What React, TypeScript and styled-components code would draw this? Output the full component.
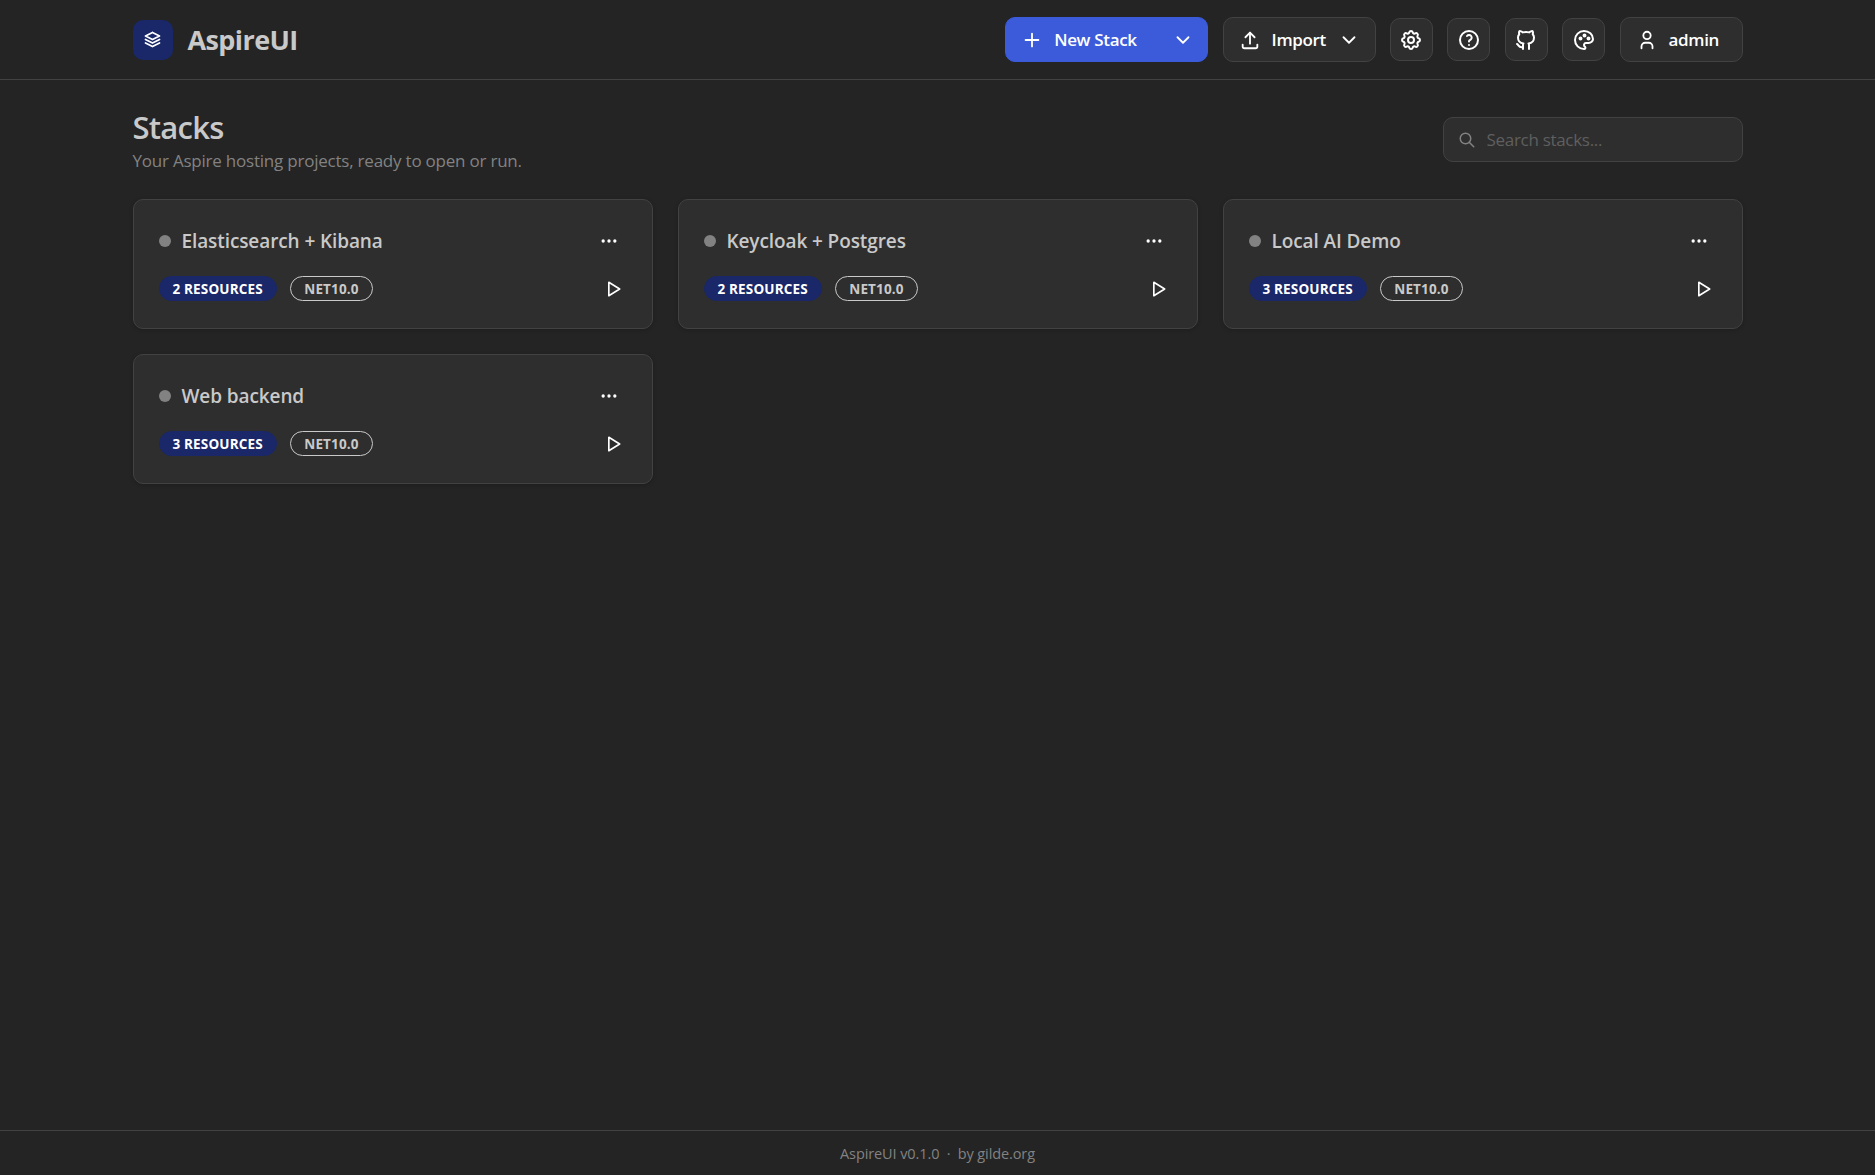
import styled, { createGlobalStyle } from 'styled-components';
import {
  TbStack2,
  TbPlus,
  TbChevronDown,
  TbUpload,
  TbSettings,
  TbHelp,
  TbBrandGithub,
  TbPalette,
  TbUser,
  TbSearch,
  TbDots,
  TbPlayerPlay,
} from 'react-icons/tb';

const GlobalStyle = createGlobalStyle`
  html, body { margin: 0; height: 100%; }
  body {
    background: #242424;
    color: #c9c9c9;
    font-family: "Open Sans", "Noto Sans", "Liberation Sans", sans-serif;
  }
  #root { height: 100%; }
`;

const Shell = styled.div`
  display: flex;
  flex-direction: column;
  height: 1175px;
`;

const Header = styled.header`
  display: flex;
  align-items: center;
  justify-content: space-between;
  height: 80px;
  padding: 0 132.5px;
  border-bottom: 1px solid #424242;
  box-sizing: border-box;
  flex: none;
`;

const Brand = styled.div`
  display: flex;
  align-items: center;
  gap: 15px;
`;

const LogoMark = styled.div`
  display: flex;
  align-items: center;
  justify-content: center;
  width: 40px;
  height: 40px;
  border-radius: 10px;
  background: #1a2768;
  color: #fff;
  font-size: 21px;
`;

const BrandName = styled.span`
  font-size: 27px;
  font-weight: 700;
  letter-spacing: -0.6px;
`;

const Toolbar = styled.nav`
  display: flex;
  align-items: center;
  gap: 14.4px;
`;

const Button = styled.button<{ $primary?: boolean; $width: number; $endPad: number }>`
  display: flex;
  align-items: center;
  width: ${(p) => p.$width}px;
  height: 45px;
  padding: 0 ${(p) => p.$endPad}px 0 15px;
  border-radius: 10px;
  border: 1px solid ${(p) => (p.$primary ? '#3b5bdb' : '#424242')};
  background: ${(p) => (p.$primary ? '#3b5bdb' : '#2e2e2e')};
  color: #fff;
  font: 600 17px "Open Sans", sans-serif;
  letter-spacing: -0.33px;
  box-sizing: border-box;
  svg { flex: none; font-size: 22px; }
`;

const ButtonLabel = styled.span`
  margin-left: 11px;
  flex: 1;
  text-align: left;
`;

const IconButton = styled.button`
  display: flex;
  align-items: center;
  justify-content: center;
  width: 43px;
  height: 43px;
  padding: 0;
  border-radius: 10px;
  border: 1px solid #424242;
  background: #2e2e2e;
  color: #fff;
  font-size: 24px;
  box-sizing: border-box;
`;

const Main = styled.main`
  flex: 1;
  padding: 25.5px 132.5px 0;
`;

const TitleRow = styled.div`
  display: flex;
  align-items: center;
  justify-content: space-between;
  margin-bottom: 25px;
`;

const PageTitle = styled.h1`
  margin: 0;
  font-size: 31px;
  line-height: 42px;
  font-weight: 600;
  letter-spacing: -0.75px;
`;

const Subtitle = styled.p`
  margin: 0;
  font-size: 17px;
  line-height: 26px;
  color: #828282;
  letter-spacing: -0.22px;
`;

const SearchBox = styled.label`
  display: flex;
  align-items: center;
  gap: 11px;
  width: 300px;
  height: 45px;
  padding: 0 14px;
  border-radius: 10px;
  border: 1px solid #424242;
  background: #2e2e2e;
  color: #828282;
  font-size: 18px;
  box-sizing: border-box;
`;

const SearchInput = styled.input`
  flex: 1;
  min-width: 0;
  border: 0;
  outline: 0;
  padding: 0;
  background: transparent;
  color: #c9c9c9;
  font: 400 17px "Open Sans", sans-serif;
  letter-spacing: -0.3px;
  &::placeholder { color: #5f5f5f; opacity: 1; }
`;

const CardGrid = styled.section`
  display: grid;
  grid-template-columns: repeat(3, 1fr);
  gap: 25px;
`;

const Card = styled.article`
  display: flex;
  flex-direction: column;
  gap: 22px;
  height: 130px;
  padding: 28px 25px 0;
  border-radius: 10px;
  border: 1px solid #424242;
  background: #2e2e2e;
  box-shadow: 0 1px 4px rgba(0, 0, 0, 0.2);
  box-sizing: border-box;
`;

const CardRow = styled.div`
  display: flex;
  align-items: center;
  justify-content: space-between;
  height: 26px;
`;

const CardTitleGroup = styled.div`
  display: flex;
  align-items: center;
  gap: 11px;
`;

const StatusDot = styled.span`
  width: 12px;
  height: 12px;
  border-radius: 50%;
  background: #828282;
`;

const CardTitle = styled.h2`
  margin: 0;
  font-size: 19px;
  font-weight: 600;
  letter-spacing: -0.1px;
`;

const BadgeGroup = styled.div`
  display: flex;
  align-items: center;
  gap: 13px;
`;

const Badge = styled.span<{ $outline?: boolean }>`
  display: flex;
  align-items: center;
  height: 25px;
  padding: 0 13.5px 0 13px;
  border-radius: 13px;
  border: 1px solid ${(p) => (p.$outline ? '#c9c9c9' : '#1a2768')};
  background: ${(p) => (p.$outline ? 'transparent' : '#1a2768')};
  color: ${(p) => (p.$outline ? '#c9c9c9' : '#fff')};
  font-size: 13.5px;
  font-weight: 700;
  letter-spacing: 0.15px;
  box-sizing: border-box;
`;

const CardAction = styled.button<{ $inset: number }>`
  display: flex;
  align-items: center;
  justify-content: center;
  width: 22px;
  height: 22px;
  padding: 0;
  margin-right: ${(p) => p.$inset}px;
  border: 0;
  background: transparent;
  color: #fff;
  font-size: 20px;
`;

const Footer = styled.footer`
  display: flex;
  align-items: center;
  justify-content: center;
  height: 45px;
  border-top: 1px solid #424242;
  color: #828282;
  font-size: 14.5px;
  letter-spacing: -0.1px;
  flex: none;
  box-sizing: border-box;
`;

const stacks = [
  { name: 'Elasticsearch + Kibana', resources: 2 },
  { name: 'Keycloak + Postgres', resources: 2 },
  { name: 'Local AI Demo', resources: 3 },
  { name: 'Web backend', resources: 3 },
];

export default function App() {
  return (
    <Shell>
      <GlobalStyle />
      <Header>
        <Brand>
          <LogoMark>
            <TbStack2 />
          </LogoMark>
          <BrandName>AspireUI</BrandName>
        </Brand>
        <Toolbar>
          <Button $primary $width={203} $endPad={13}>
            <TbPlus />
            <ButtonLabel>New Stack</ButtonLabel>
            <TbChevronDown />
          </Button>
          <Button $width={153} $endPad={15}>
            <TbUpload />
            <ButtonLabel>Import</ButtonLabel>
            <TbChevronDown />
          </Button>
          <IconButton><TbSettings /></IconButton>
          <IconButton><TbHelp /></IconButton>
          <IconButton><TbBrandGithub /></IconButton>
          <IconButton><TbPalette /></IconButton>
          <Button $width={123} $endPad={15}>
            <TbUser />
            <ButtonLabel>admin</ButtonLabel>
          </Button>
        </Toolbar>
      </Header>
      <Main>
        <TitleRow>
          <div>
            <PageTitle>Stacks</PageTitle>
            <Subtitle>Your Aspire hosting projects, ready to open or run.</Subtitle>
          </div>
          <SearchBox>
            <TbSearch />
            <SearchInput placeholder="Search stacks..." />
          </SearchBox>
        </TitleRow>
        <CardGrid>
          {stacks.map((stack) => (
            <Card key={stack.name}>
              <CardRow>
                <CardTitleGroup>
                  <StatusDot />
                  <CardTitle>{stack.name}</CardTitle>
                </CardTitleGroup>
                <CardAction $inset={7}><TbDots /></CardAction>
              </CardRow>
              <CardRow>
                <BadgeGroup>
                  <Badge>{stack.resources} RESOURCES</Badge>
                  <Badge $outline>NET10.0</Badge>
                </BadgeGroup>
                <CardAction $inset={3}><TbPlayerPlay /></CardAction>
              </CardRow>
            </Card>
          ))}
        </CardGrid>
      </Main>
      <Footer>AspireUI v0.1.0 &nbsp;·&nbsp; by gilde.org</Footer>
    </Shell>
  );
}
